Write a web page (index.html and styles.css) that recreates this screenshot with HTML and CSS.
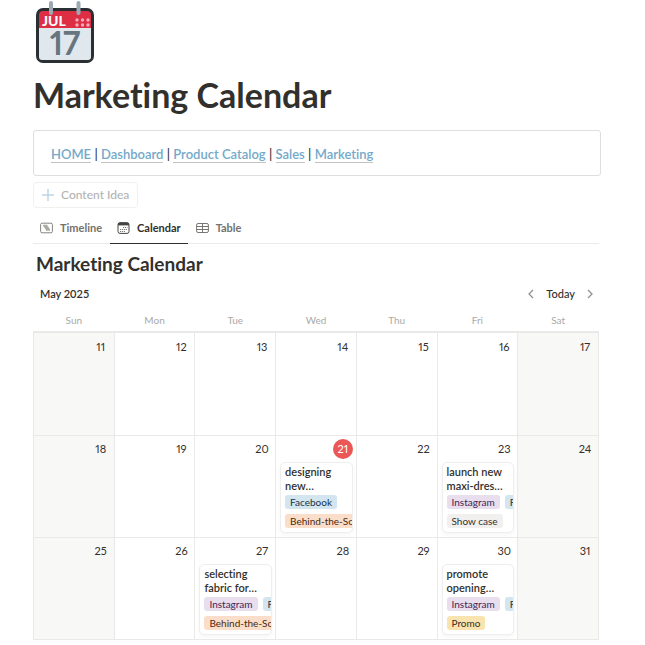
FILE: index.html
```html
<!DOCTYPE html>
<html lang="en">
<head>
<meta charset="utf-8">
<title>Marketing Calendar</title>
<link rel="stylesheet" href="styles.css">
</head>
<body>
<main class="page">
  <svg class="page-icon" viewBox="0 0 60 62" aria-hidden="true">
    <rect x="1" y="7" width="58" height="55" rx="7" fill="#292f33"/>
    <path d="M4 27h52v29a3 3 0 0 1-3 3H7a3 3 0 0 1-3-3z" fill="#e1e8ed"/>
    <path d="M4 27V14a4 4 0 0 1 4-4h44a4 4 0 0 1 4 4v13z" fill="#dd2e44"/>
    <path d="M16 2v10M43.500 2v10" stroke="#99aab5" stroke-width="4" stroke-linecap="round"/>
    <g fill="#f4abba"><circle cx="42" cy="19" r="1.700"/><circle cx="47.500" cy="19" r="1.700"/><circle cx="53" cy="19" r="1.700"/><circle cx="42" cy="24" r="1.700"/><circle cx="47.500" cy="24" r="1.700"/><circle cx="53" cy="24" r="1.700"/></g>
    <text class="icon-month" x="7" y="25">JUL</text>
    <text class="icon-day" x="30" y="54" text-anchor="middle">17</text>
  </svg>
  <h1 class="title">Marketing Calendar</h1>
  <nav class="links">
    <a href="#">HOME</a> | <a href="#">Dashboard</a> | <a href="#">Product Catalog</a> | <a href="#">Sales</a> | <a href="#">Marketing</a>
  </nav>
  <button class="idea" type="button">
    <svg width="12" height="12" viewBox="0 0 12 12" aria-hidden="true"><path d="M6 0v12M0 6h12" stroke="#bdd5e4" stroke-width="1.500"/></svg>
    Content Idea
  </button>
  <div class="tabs">
    <button class="tab" type="button">
      <svg width="13" height="12" viewBox="0 0 13 12" fill="none" stroke="#85847f" aria-hidden="true"><rect x=".6" y="1.200" width="11.800" height="9.600" rx="1.500"/><path d="M3 3.500h4.500M4 5h4.500M5 6.500h4.500M6 8h4" stroke-width="1.300" stroke="#aaa9a5"/></svg>
      Timeline
    </button>
    <button class="tab tab-active" type="button">
      <svg width="13" height="12" viewBox="0 0 13 12" fill="none" stroke="#454440" aria-hidden="true"><rect x="1" y=".6" width="11" height="10.800" rx="2"/><path d="M1 2.200h11" stroke-width="2.400"/><path d="M6 5.500h4.500M3 7.500h7M3 9.500h5" stroke="#777672" stroke-dasharray="1.200 .8"/></svg>
      Calendar
    </button>
    <button class="tab" type="button">
      <svg width="13" height="12" viewBox="0 0 13 12" fill="none" stroke="#777672" aria-hidden="true"><rect x=".6" y="1.500" width="11.800" height="9" rx="1.500"/><path d="M.6 4.500h11.800M.6 7.500h11.800M6.500 1.500v9"/></svg>
      Table
    </button>
  </div>
  <h2 class="subtitle">Marketing Calendar</h2>
  <div class="toolbar">
    <span>May 2025</span>
    <div class="pager">
      <button type="button" aria-label="Previous month"><svg width="6" height="10" viewBox="0 0 6 10" aria-hidden="true"><path d="M5 1L1 5l4 4" fill="none" stroke="#91918e" stroke-width="1.300"/></svg></button>
      <button type="button">Today</button>
      <button type="button" aria-label="Next month"><svg width="6" height="10" viewBox="0 0 6 10" aria-hidden="true"><path d="M1 1l4 4-4 4" fill="none" stroke="#91918e" stroke-width="1.300"/></svg></button>
    </div>
  </div>
  <table class="calendar">
    <thead>
      <tr><th>Sun</th><th>Mon</th><th>Tue</th><th>Wed</th><th>Thu</th><th>Fri</th><th>Sat</th></tr>
    </thead>
    <tbody>
      <tr>
        <td><span class="day">11</span></td>
        <td><span class="day">12</span></td>
        <td><span class="day">13</span></td>
        <td><span class="day">14</span></td>
        <td><span class="day">15</span></td>
        <td><span class="day">16</span></td>
        <td><span class="day">17</span></td>
      </tr>
      <tr>
        <td><span class="day">18</span></td>
        <td><span class="day">19</span></td>
        <td><span class="day">20</span></td>
        <td><span class="day today">21</span>
          <article class="card"><p>designing new…</p>
            <div class="tags"><span class="tag blue">Facebook</span></div>
            <div class="tags"><span class="tag orange">Behind-the-Scenes</span></div></article></td>
        <td><span class="day">22</span></td>
        <td><span class="day">23</span>
          <article class="card"><p>launch new maxi-dres…</p>
            <div class="tags"><span class="tag purple">Instagram</span><span class="tag blue">Facebook</span></div>
            <div class="tags"><span class="tag gray">Show case</span></div></article></td>
        <td><span class="day">24</span></td>
      </tr>
      <tr>
        <td><span class="day">25</span></td>
        <td><span class="day">26</span></td>
        <td><span class="day">27</span>
          <article class="card"><p>selecting fabric for…</p>
            <div class="tags"><span class="tag purple">Instagram</span><span class="tag blue">Facebook</span></div>
            <div class="tags"><span class="tag orange">Behind-the-Scenes</span></div></article></td>
        <td><span class="day">28</span></td>
        <td><span class="day">29</span></td>
        <td><span class="day">30</span>
          <article class="card"><p>promote opening…</p>
            <div class="tags"><span class="tag purple">Instagram</span><span class="tag blue">Facebook</span></div>
            <div class="tags"><span class="tag yellow">Promo</span></div></article></td>
        <td><span class="day">31</span></td>
      </tr>
    </tbody>
  </table>
</main>
</body>
</html>
```
FILE: styles.css
```css
* { box-sizing: border-box; }
body { margin: 0; background: #fff; color: #32302c; font-family: Lato, "Liberation Sans", sans-serif; font-size: 11px; line-height: 14px; font-variant-ligatures: none; }
h1, h2, p { margin: 0; }
button { padding: 0; border: 0; background: none; color: inherit; font: inherit; font-variant-ligatures: none; }
svg { flex: none; }
.page { padding: 1px 46px 0 33px; }
.page-icon { display: block; width: 60px; height: 62px; margin-left: 2px; }
.icon-month { fill: #fff; font-size: 14px; font-weight: 900; }
.icon-day { fill: #66757f; font-size: 32px; font-weight: 700; font-variant-numeric: proportional-nums; }
.title { margin-top: 12px; font-size: 34px; font-weight: 700; line-height: 40px; }
.links { margin: 15px -2px 0 0; padding: 15px 17px 13px; border: 1px solid #dededc; border-radius: 3px; font-size: 13px; font-weight: 500; line-height: 16px; }
.links a { color: #74a9c9; font-weight: 600; text-decoration: none; border-bottom: 1px solid #c3c2bf; }
.idea { display: flex; align-items: center; gap: 7px; height: 26px; margin-top: 6px; padding: 0 8px; border: 1px solid #f0f0ef; border-radius: 4px; color: #b3b2b0; font-size: 12px; font-weight: 500; }
.tabs { display: flex; gap: 1px; height: 36px; border-bottom: 1px solid #ebebea; }
.tab { display: flex; align-items: center; gap: 7px; height: 36px; padding: 4px 7px 0; border-bottom: 1px solid transparent; color: #73726e; font-weight: 700; }
.tab-active { border-color: #32302c; color: #32302c; }
.subtitle { margin: 9px 3px 0; font-size: 19px; font-weight: 700; line-height: 22px; }
.toolbar { display: flex; justify-content: space-between; margin-top: 12px; padding: 0 6px 0 7px; font-weight: 600; }
.pager { display: flex; align-items: center; gap: 12px; font-weight: 500; }
.pager button { display: flex; }
.calendar { width: 100%; margin-top: 7px; border-collapse: collapse; table-layout: fixed; }
th { height: 24px; padding: 0; color: #aaa9a6; font-size: 10px; font-weight: 400; }
td { height: 102px; padding: 3px 3px 3px 4px; border: 1px solid #e9e9e7; vertical-align: top; }
tbody tr:first-child td { height: 103px; padding-top: 4px; border-top-width: 2px; }
td:first-child, td:last-child { background: #f8f8f7; }
.day { display: block; width: 20px; height: 20px; margin-left: auto; border-radius: 10px; line-height: 20px; text-align: center; font-variant-numeric: proportional-nums; }
.today { background: #eb5757; color: #fff; }
.card { height: 71px; margin-top: 3px; padding: 2px 0 0 4px; overflow: hidden; border: 1px solid #eeeeed; border-radius: 5px; background: #fff; box-shadow: 0 2px 4px #0000000a; }
.card p { font-weight: 600; line-height: 14px; }
.tags { display: flex; gap: 5px; margin-top: 2px; }
.tags + .tags { margin-top: 5px; }
.tag { flex: none; padding: 0 5px; border-radius: 3px; font-size: 10px; line-height: 14px; }
.blue { background: #d3e5ef; color: #183347; }
.orange { background: #fadec9; color: #49290e; }
.purple { background: #e8deee; color: #412454; }
.gray { background: #f1f0ef; color: #32302c; }
.yellow { background: #f9e4af; color: #402c1b; }
```
